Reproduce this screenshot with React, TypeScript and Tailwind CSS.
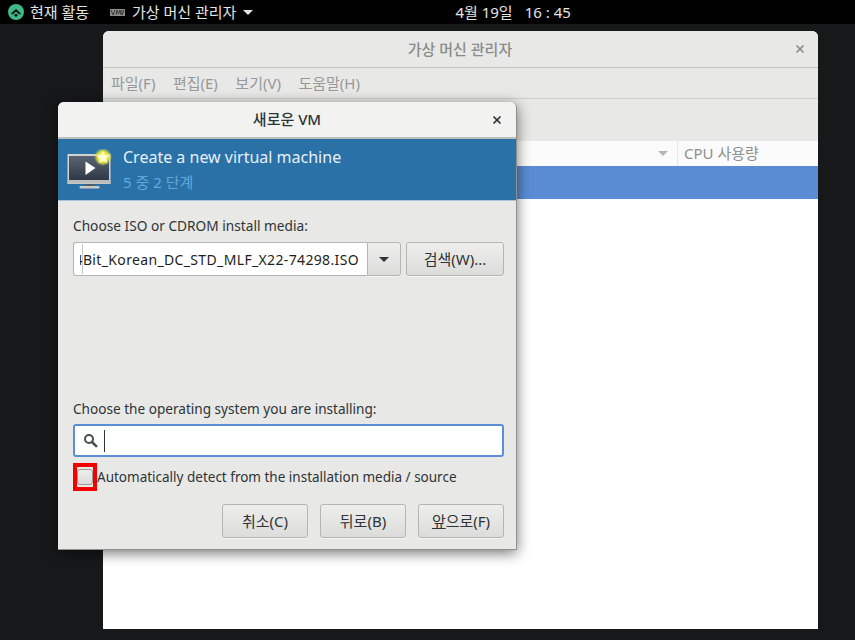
import React from "react";
import { X } from "lucide-react";

const fontStack = "font-['Noto_Sans','Noto_Sans_CJK_KR',sans-serif]";
const buttonClass =
  "flex items-center justify-center h-[34px] rounded-[3px] border border-[#b5b5b1] bg-gradient-to-b from-[#eeeeec] to-[#dcdcda] text-[15px] text-[#2e3436] shadow-[0_1px_0_#ffffff80]";

const MonitorIcon = () => (
  <svg width="46" height="42" viewBox="0 2 46 42">
    <defs>
      <radialGradient id="glow">
        <stop offset="0%" stopColor="#fff36a" />
        <stop offset="60%" stopColor="#e6e83a" />
        <stop offset="100%" stopColor="#e6e83a" stopOpacity="0" />
      </radialGradient>
      <linearGradient id="screen" x1="0" y1="0" x2="0" y2="1">
        <stop offset="0%" stopColor="#5a6474" />
        <stop offset="100%" stopColor="#2f3846" />
      </linearGradient>
    </defs>
    <rect x="0.5" y="7" width="43" height="30" fill="#d3d3cf" />
    <rect x="2" y="9" width="40" height="24" fill="url(#screen)" />
    <rect x="0.5" y="33" width="43" height="3.5" fill="#bdbdb9" />
    <path d="M18.5 14.5 L18.5 28 L28.5 21 Z" fill="#ffffff" />
    <rect x="18" y="37" width="9" height="2" fill="#555a60" />
    <rect x="12.5" y="39" width="20" height="2.5" rx="1" fill="#c9c9c5" />
    <circle cx="36" cy="10" r="9" fill="url(#glow)" />
    <path
      d="M36 4 l1.9 4 4.4 .5 -3.2 3 .8 4.4 -3.9 -2.2 -3.9 2.2 .8 -4.4 -3.2 -3 4.4 -.5 Z"
      fill="#fdfbd8"
    />
  </svg>
);

const ActivitiesLogo = () => (
  <svg width="16" height="16" viewBox="0 0 16 16">
    <circle cx="8" cy="8" r="8" fill="#3fb98a" />
    <path d="M3 9.6 L8 5 L13 9.6 L11.4 10.6 L8 7.6 L4.6 10.6 Z" fill="#0c0c0c" />
    <path d="M6 11.3 L8 9.6 L10 11.3 L8 13 Z" fill="#0c0c0c" />
  </svg>
);

const VmManagerIcon = () => (
  <svg width="15" height="7" viewBox="0 0 15 7">
    <rect width="15" height="7" fill="#8d8d8b" />
    <path d="M1 1 L3 6 L5 1 M6 6 L7 1 L8.5 5 L10 1 L11 6 M12 1 L12 6 L14 1" fill="none" stroke="#3a3a3a" strokeWidth="1" />
  </svg>
);

const SearchIcon = () => (
  <svg width="15" height="15" viewBox="0 0 15 15" fill="none" stroke="#4a4f51">
    <circle cx="6" cy="6" r="4" strokeWidth="2" />
    <path d="M9 9 L13.2 13.2" strokeWidth="2.6" strokeLinecap="round" />
  </svg>
);

const TopBar = () => (
  <div className="flex h-6 items-center bg-black text-[15px] text-[#e4e4e2]">
    <div className="flex w-[110px] items-center gap-[6px] pl-[8px]">
      <ActivitiesLogo />
      <span>현재 활동</span>
    </div>
    <div className="flex items-center gap-[7px]">
      <VmManagerIcon />
      <span>가상 머신 관리자</span>
      <span className="h-0 w-0 border-x-[5px] border-t-[5px] border-x-transparent border-t-[#e4e4e2]" />
    </div>
    <div className="ml-[202px] flex gap-[12px]">
      <span>4월 19일</span>
      <span>16 : 45</span>
    </div>
  </div>
);

const ManagerWindow = () => (
  <div className="absolute left-[103px] top-[31px] flex h-[598px] w-[715px] flex-col overflow-hidden rounded-t-[6px] bg-white">
    <div className="relative flex h-[37px] items-center justify-center border-b border-[#c4c4c0] bg-[#e8e8e6] text-[15px] font-medium text-[#8a8c8c]">
      <span className="-ml-px">가상 머신 관리자</span>
      <X className="absolute right-[12px] top-[12px] text-[#8a8c8c]" size={12} strokeWidth={3.5} />
    </div>
    <div className="flex h-[31px] items-center gap-[17.5px] border-b border-[#cfcfcb] bg-[#e8e8e6] pl-2 text-[15px] text-[#96989a]">
      <span>파일(F)</span>
      <span>편집(E)</span>
      <span>보기(V)</span>
      <span>도움말(H)</span>
    </div>
    <div className="h-[42px] bg-[#e8e8e6]" />
    <div className="flex h-[25px] items-center justify-end bg-[#fbfbfb] text-[15px] text-[#8d8f90]">
      <span className="mr-[9px] h-0 w-0 border-x-[5px] border-t-[5px] border-x-transparent border-t-[#b5b5b3]" />
      <div className="flex h-full w-[141px] items-center border-l border-[#e8e8e6] pl-[6px]">CPU 사용량</div>
    </div>
    <div className="h-[33px] bg-[#5a8cd4]" />
  </div>
);

const NewVmDialog = () => (
  <div className="absolute left-[58px] top-[102px] flex h-[448px] w-[459px] flex-col overflow-hidden rounded-t-[6px] border-r border-b border-[#8f8f8b] bg-[#e8e8e6] shadow-[0_3px_14px_rgba(0,0,0,0.55)]">
    <div className="relative flex h-[37px] items-center justify-center border-b-2 border-[#bdbdb9] bg-[#f2f2f1] text-[15px] font-medium text-[#2e3436]">
      새로운 VM
      <X className="absolute right-[13px] top-[12px] text-[#2e3436]" size={12} strokeWidth={3.5} />
    </div>
    <div className="flex h-[62px] items-center border-b border-[#a8c4da] bg-[#2a71a8] pl-[9px]">
      <MonitorIcon />
      <div className="-mt-[2px] ml-[10px] flex flex-col">
        <span className="text-[16px] leading-[22px] text-[#e6f0f7]">Create a new virtual machine</span>
        <span className="mt-[4px] text-[15px] leading-[20px] text-[#62a8dc]">5 중 2 단계</span>
      </div>
    </div>
    <div className="flex flex-1 flex-col pl-[15px] pr-[12px] pt-[15px]">
      <div className="text-[13.7px] leading-[20px] text-[#2e3436]">Choose ISO or CDROM install media:</div>
      <div className="mt-[6px] flex gap-[5px]">
        <div className="flex w-[328px]">
          <div className="relative flex h-[34px] min-w-0 flex-1 items-center rounded-l-[3px] border border-r-0 border-[#b5b5b1] bg-white pl-[6px] pr-[8px]">
            <div className="flex min-w-0 flex-1 justify-end overflow-hidden whitespace-nowrap text-[14px] tracking-[0.35px] text-[#1c1f20]">
              <span className="shrink-0">Win10_21H2_64Bit_Korean_DC_STD_MLF_X22-74298.ISO</span>
            </div>
            <span className="absolute left-[8px] top-[1px] h-[30px] w-px bg-[#c8c8c8]" />
          </div>
          <div className={`${buttonClass} w-[34px] shrink-0 rounded-l-none`}>
            <span className="h-0 w-0 border-x-[5px] border-t-[5px] border-x-transparent border-t-[#2e3436]" />
          </div>
        </div>
        <div className={`${buttonClass} w-[98px]`}>검색(W)...</div>
      </div>
      <div className="mt-[123px] text-[13.6px] leading-[20px] text-[#2e3436]">Choose the operating system you are installing:</div>
      <div className="mt-[5px] flex h-[33px] w-[431px] items-center rounded-[3px] border-2 border-[#5a8fd8] bg-white pl-[8px]">
        <SearchIcon />
        <span className="ml-[6px] h-[22px] w-px bg-[#2e3436]" />
      </div>
      <div className="mt-[6px] flex h-[28px] items-center">
        <div className="flex h-[28px] w-[24px] items-center justify-center border-4 border-[#f40000]">
          <span className="h-[16px] w-[16px] shrink-0 rounded-[3px] border border-[#9a9a96] bg-gradient-to-b from-[#eeeeec] to-[#dcdcda]" />
        </div>
        <span className="text-[13.5px] text-[#2e3436]">Automatically detect from the installation media / source</span>
      </div>
      <div className="mt-[13px] flex justify-end gap-[12px]">
        <div className={`${buttonClass} w-[86px]`}>취소(C)</div>
        <div className={`${buttonClass} w-[86px]`}>뒤로(B)</div>
        <div className={`${buttonClass} w-[86px]`}>
          <span><span className="underline">앞</span>으로(F)</span>
        </div>
      </div>
    </div>
  </div>
);

export default function App() {
  return (
    <div className={`relative h-[640px] w-[855px] overflow-hidden bg-[#17181a] ${fontStack}`}>
      <TopBar />
      <ManagerWindow />
      <NewVmDialog />
    </div>
  );
}
